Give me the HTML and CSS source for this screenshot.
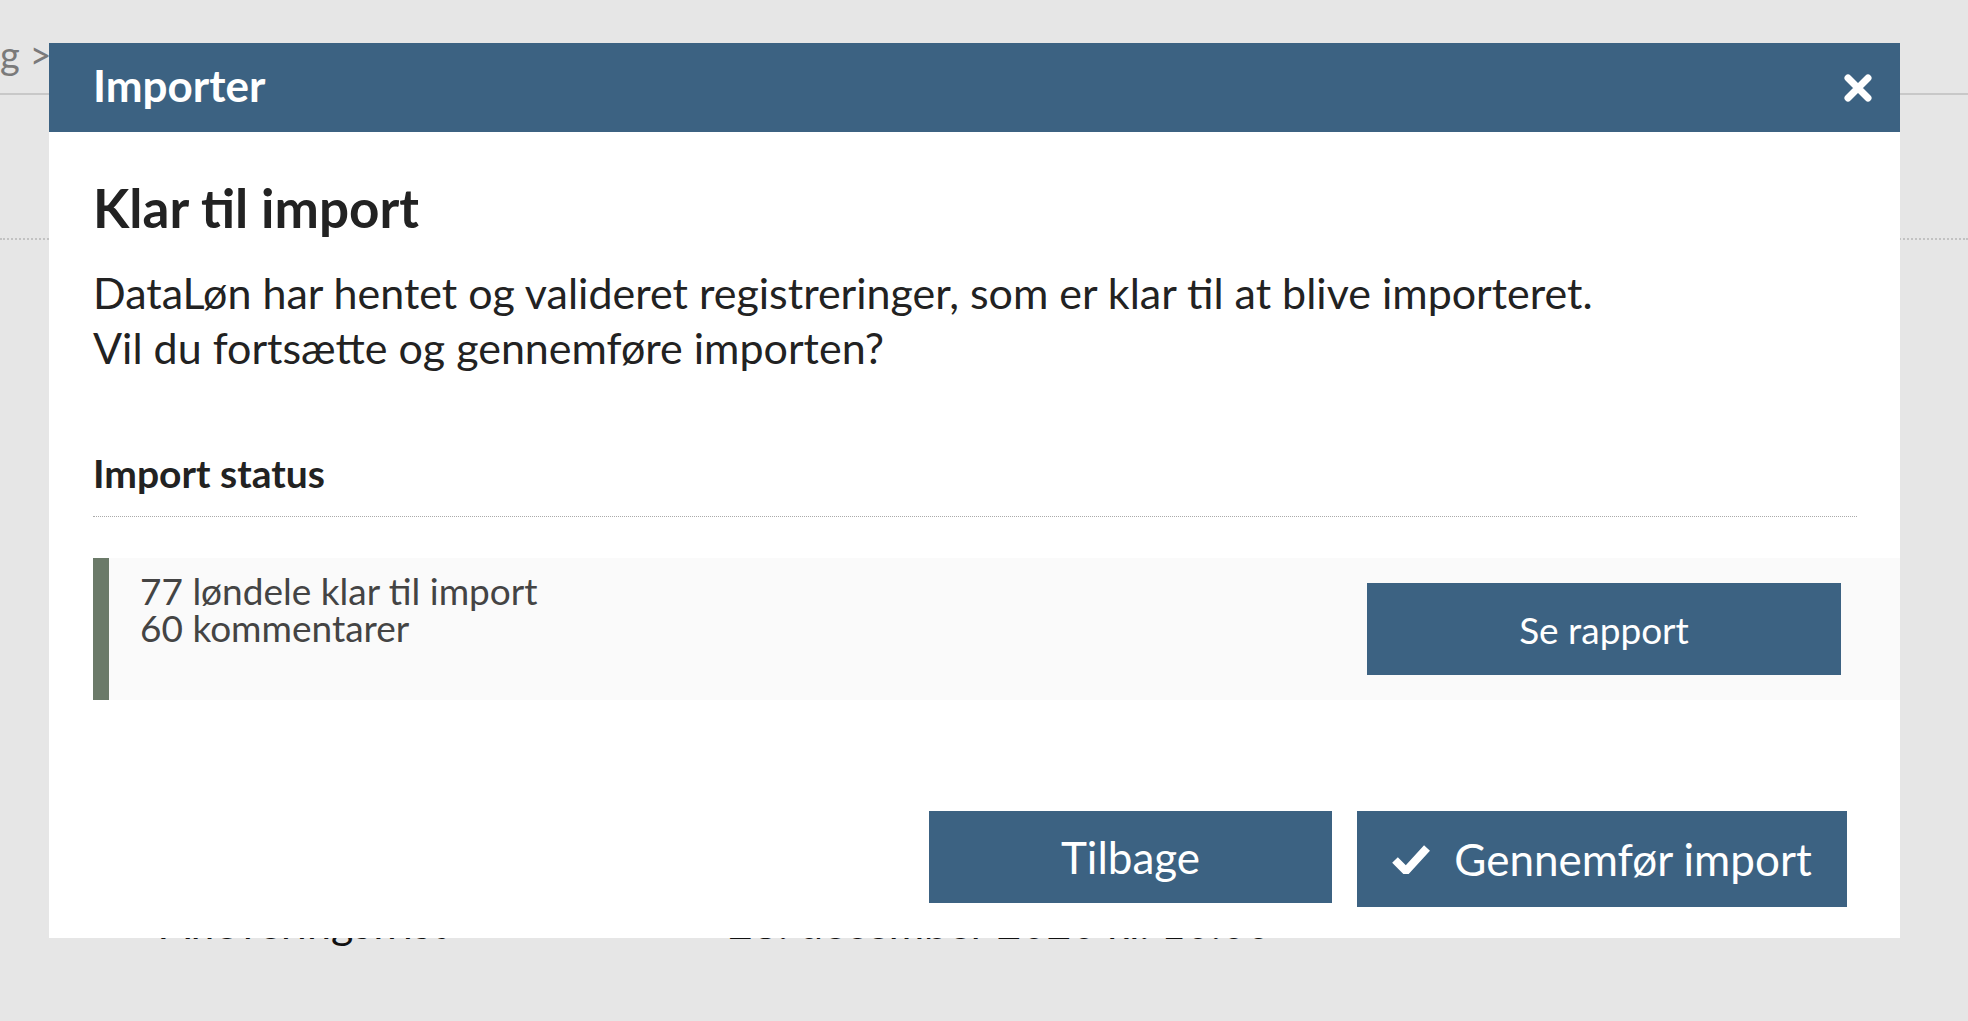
FILE: index.html
```html
<!DOCTYPE html>
<html lang="da">
<head>
    <meta charset="UTF-8">
    <meta name="viewport" content="width=device-width, initial-scale=1.0">
    <title>DataLøn - Importer</title>
    <link rel="stylesheet" href="styles.css">
</head>
<body>

    <div class="page">
        <div class="crumbs">g &gt;</div>
        <div class="page-head"></div>
        <div class="info-row">
            <span class="info-label">Afleveringsfrist</span>
            <span class="info-value">28. december 2020 kl. 10:00</span>
        </div>
    </div>

    <div class="modal">
        <div class="modal-header">
            <h2>Importer</h2>
            <button class="close" aria-label="Luk">
                <svg width="32" height="32" viewBox="0 0 32 32">
                    <path d="M6 6 L26 26 M26 6 L6 26" stroke="#fff" stroke-width="7" stroke-linecap="round"/>
                </svg>
            </button>
        </div>

        <div class="modal-body">
            <h1>Klar til import</h1>
            <p>DataLøn har hentet og valideret registreringer, som er klar til at blive importeret.<br>
            Vil du fortsætte og gennemføre importen?</p>

            <h3>Import status</h3>
            <div class="status">
                <div class="status-text">
                    77 løndele klar til import<br>
                    60 kommentarer
                </div>
                <button class="btn btn-report">Se rapport</button>
            </div>
        </div>

        <div class="modal-footer">
            <button class="btn btn-back">Tilbage</button>
            <button class="btn btn-confirm">
                <svg width="38" height="30" viewBox="0 0 38 30">
                    <path d="M3 16 L14 27 L35 4" fill="none" stroke="#fff" stroke-width="8" stroke-linejoin="miter"/>
                </svg>
                Gennemfør import
            </button>
        </div>
    </div>

</body>
</html>
```

FILE: styles.css
```css
body {
    font-family: Lato, 'Open Sans', sans-serif;
    background-color: #e6e6e6;
    margin: 0;
    color: #222;
}

.page {
    position: relative;
    height: 1021px;
    overflow: hidden;
}

.crumbs {
    box-sizing: border-box;
    height: 95px;
    padding-top: 31px;
    font-size: 38px;
    line-height: 46px;
    color: #7a7a7a;
    white-space: nowrap;
    border-bottom: 2px solid #c8c8c8;
}

.page-head {
    height: 143px;
    border-bottom: 2px dotted #c2c2c2;
}

.info-row {
    display: flex;
    margin-top: 659px;
    padding-left: 161px;
    font-size: 43px;
    line-height: 48px;
    color: #111;
}

.info-label {
    width: 567px;
}

/* dialog */

.modal {
    position: absolute;
    left: 49px;
    top: 43px;
    width: 1851px;
    background-color: #fff;
}

.modal-header {
    display: flex;
    align-items: center;
    justify-content: space-between;
    height: 89px;
    padding: 0 26px 0 44px;
    background-color: #3c6282;
}

.modal-header h2 {
    margin: 0 0 6px;
    font-size: 44px;
    font-weight: 700;
    color: #fff;
}

.close {
    background: none;
    border: none;
    padding: 0;
    width: 32px;
    height: 32px;
    cursor: pointer;
}

.modal-body {
    padding: 46px 43px 0 44px;
}

.modal-body h1 {
    margin: 0;
    font-size: 53px;
    line-height: 60px;
    font-weight: 700;
    color: #222;
}

.modal-body p {
    margin: 27px 0 0;
    font-size: 43px;
    line-height: 55px;
    color: #222;
}

.modal-body h3 {
    margin: 75px 0 0;
    padding-bottom: 20px;
    font-size: 39px;
    line-height: 46px;
    font-weight: 700;
    border-bottom: 1px dotted #aaa;
}

.status {
    display: flex;
    align-items: center;
    justify-content: space-between;
    height: 142px;
    margin: 41px -43px 0 0;
    padding: 0 59px 0 31px;
    background-color: #fafafa;
    border-left: 16px solid #6b7a69;
}

.status-text {
    align-self: flex-start;
    padding-top: 14px;
    font-size: 37px;
    line-height: 37px;
    color: #444;
}

.btn {
    display: flex;
    align-items: center;
    justify-content: center;
    gap: 24px;
    background-color: #3c6282;
    color: #fff;
    font-family: Lato, 'Open Sans', sans-serif;
    border: none;
    cursor: pointer;
}

.btn-report {
    width: 474px;
    height: 92px;
    font-size: 37px;
}

.modal-footer {
    display: flex;
    align-items: flex-start;
    justify-content: flex-end;
    gap: 25px;
    padding: 111px 53px 31px 44px;
}

.btn-back {
    width: 403px;
    height: 92px;
    font-size: 44px;
}

.btn-confirm {
    width: 490px;
    height: 96px;
    font-size: 44px;
}
```
